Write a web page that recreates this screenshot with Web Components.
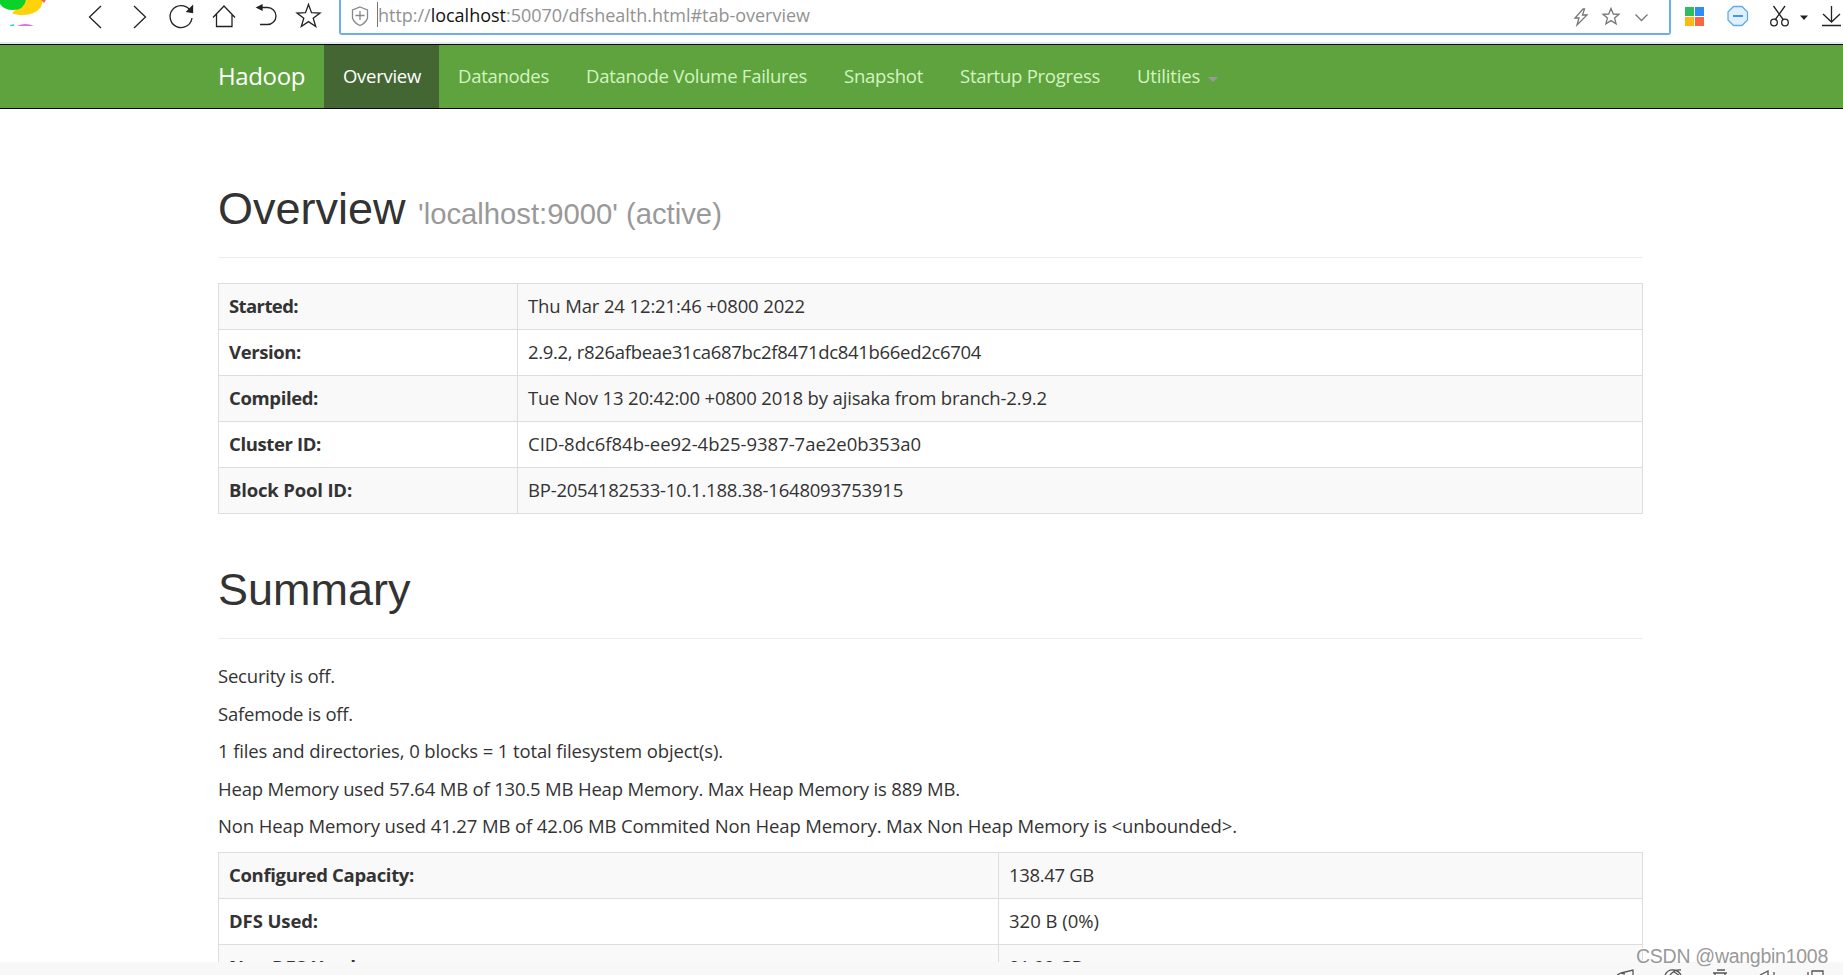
<!DOCTYPE html>
<html lang="en">
<head>
<meta charset="utf-8">
<title>Namenode information</title>
<style>
    body {
        margin: 0;
        height: 975px;
        overflow: hidden;
        background: #fff;
        color: #333;
        font: 18.500px/25px "Open Sans", "Noto Sans", sans-serif;
    }
</style>
</head>
<body>
<dfs-page></dfs-page>

<script>
const define = (name, html, setup) => {
    const template = document.createElement("template")
    template.innerHTML = html
    customElements.define(name, class extends HTMLElement {
        constructor() {
            super()
            this.attachShadow({ mode: "open" })
            this.shadowRoot.appendChild(template.content.cloneNode(true))
        }

        connectedCallback() {
            if (setup) setup(this, this.shadowRoot)
        }
    })
}

// one line of text, spaced out to the width given in "w"
define("fit-text", `
    <style>
        :host { display: inline-block; white-space: nowrap; }
        span { display: inline-block; }
    </style>
    <span><slot></slot></span>
`, (host, root) => {
    const span = root.querySelector("span")
    const width = Number(host.getAttribute("w"))
    if (!width) return
    const spacing = (width - span.getBoundingClientRect().width) / host.textContent.length
    span.style.letterSpacing = spacing.toFixed(3) + "px"
})

define("browser-bar", `
    <style>
        :host { display: flex; height: 42px; border-bottom: 2px solid #e2eaf2; overflow: hidden; background: #fff; }
        svg { display: block; flex: none; fill: none; stroke: #222; stroke-width: 1.3; }
        .address {
            box-sizing: border-box;
            width: 1332px;
            height: 35px;
            border: 2px solid #6aaeee;
            border-top: 0;
            border-radius: 0 0 3px 3px;
            display: flex;
            align-items: flex-start;
        }
        .url {
            flex: 1;
            margin: 2px 0 0 6px;
            border-left: 1px solid #777;
            height: 25px;
            color: #929292;
            font-size: 18px;
            line-height: 27px;
        }
        b { font-weight: 400; color: #111; }
    </style>
    <svg width="339" height="42" viewBox="0 0 339 42">
        <g stroke="none">
            <path fill="#ffd20a" d="M12 13L26 0h16q1 3-1 7-6 8-18 8-8 0-11-2"/>
            <path fill="#ff6347" d="M41 0h5l-2 3z"/>
            <path fill="#0bd22b" d="M0 0h26q-2 10-13 10Q4 10 0 4z"/>
            <path fill="#2ed9df" d="M10 25l4-1v2h-4z"/>
            <path fill="#dc6df0" d="M17 26q8-4 17 0z"/>
        </g>
        <path d="M101 6L89.500 17 101 28M134 6l11.500 11L134 28"/>
        <path d="M189.500 9.500A11 11 0 1 0 192 18"/>
        <path fill="#222" d="M192.500 6v6.500l-5.500-1z"/>
        <path d="M213 17.500L224 6l11 11.500M216.500 14v12.500h15.500V14"/>
        <path d="M259 7.500h8.500a8.500 8.500 0 0 1 0 17H260"/>
        <path fill="#222" d="M257 7.500l5-2.500v5z"/>
        <path d="M308.500 4.500l3 8.200 8.500.3-6.800 5.200 2.500 8.300-7.200-4.900-7.200 4.900 2.500-8.300-6.800-5.200 8.500-.3z"/>
    </svg>
    <div class="address">
        <svg width="30" height="33" viewBox="341 0 30 33" style="stroke:#888">
            <path d="M360 7l7.500 3v8q-1.500 5-7.500 7.500-6-2.500-7.500-7.500v-8zM360 11v9M355.500 15.500h9"/>
        </svg>
        <div class="url"><fit-text w="432">http://<b>localhost</b>:50070/dfshealth.html#tab-overview</fit-text></div>
        <svg width="100" height="33" viewBox="1569 0 100 33" style="stroke:#777">
            <path d="M1583 9l-8 9h4l-2 7 10-10h-4.500l2-6z"/>
            <path d="M1611 8.500l2.300 5.500 5.700.3-4.400 3.800 1.500 5.700-5.100-3.200-5.100 3.200 1.500-5.700-4.400-3.800 5.700-.3z"/>
            <path d="M1635.500 14.500l6 6 6-6"/>
        </svg>
    </div>
    <svg width="172" height="42" viewBox="1671 0 172 42">
        <g stroke="none">
            <path fill="#2dbd60" d="M1685 7h9v9h-9z"/>
            <path fill="#2e8df5" d="M1695 7h9v9h-9z"/>
            <path fill="#fcb813" d="M1685 17h9v9h-9z"/>
            <path fill="#fa6542" d="M1695 17h9v9h-9z"/>
        </g>
        <path stroke="#5fa8ea" fill="#e1f0fc" d="M1733.500 6.500h8.500l5.500 5.500v8l-5.500 5.500h-8.500L1728 20v-8z"/>
        <path stroke="#4398ea" stroke-width="2" d="M1733 16h10"/>
        <path d="M1773.500 6l10 14M1785 6l-10 14"/>
        <circle cx="1774" cy="22.500" r="3.300"/>
        <circle cx="1785" cy="22.500" r="3.300"/>
        <path fill="#222" stroke="none" d="M1800 15.500h8l-4 4.500z"/>
        <path d="M1831.500 6v16M1823 14l8.500 8 8.500-8M1822 25.500h19"/>
    </svg>
`)

define("nav-item", `
    <style>
        :host { display: block; box-sizing: border-box; padding: 18px 18px 0 19px; color: #d2f5c0; }
        :host([active]) { background: #446633; color: #fff; }
        :host([dropdown]) { display: flex; }
        i { display: none; margin: 14px 0 0 8px; height: 0; border: 5px solid transparent; border-top-color: #999; border-bottom: 0; }
        :host([dropdown]) i { display: block; }
    </style>
    <slot></slot><i></i>
`)

define("nav-bar", `
    <style>
        :host { display: flex; height: 63px; padding-left: 218px; background: #5fa33e; border: solid #080808; border-width: 1px 0; }
        .brand { width: 106px; color: #fff; font-size: 24px; font-weight: 500; line-height: 62px; }
    </style>
    <div class="brand"><fit-text w="87">Hadoop</fit-text></div>
    <slot></slot>
`)

define("page-header", `
    <style>
        :host { display: block; border-bottom: 1px solid #eee; }
        h1 { margin: 0; font: 45px/52px "Liberation Sans", Arial, sans-serif; }
        ::slotted(small) { font-size: 29.250px; color: #999; }
    </style>
    <h1><slot></slot></h1>
`)

define("info-row", `
    <style>
        :host { display: flex; height: 45px; border-bottom: 1px solid #ddd; line-height: 44px; }
        :host(:nth-child(odd)) { background: #f9f9f9; }
        b { flex: none; box-sizing: border-box; width: var(--head); padding-left: 10px; border-right: 1px solid #ddd; font-weight: 700; }
        div { padding-left: 10px; }
    </style>
    <b><slot name="head"></slot></b>
    <div><slot></slot></div>
`)

define("info-table", `
    <style>
        :host { display: block; border: 1px solid #ddd; border-bottom: 0; }
    </style>
    <slot></slot>
`)

define("status-bar", `
    <style>
        :host { display: flex; justify-content: flex-end; height: 13px; background: #f8f8f8; overflow: hidden; }
        svg { display: block; fill: none; stroke: #555; stroke-width: 1.3; }
    </style>
    <svg width="243" height="13" viewBox="1600 962 243 13">
        <path d="M1617 975l4-2 4 1M1621 973l12-3v5"/>
        <path d="M1665 975q3-6 9-5 5 1 7 5M1670 975q5-6 11-5M1674 972l5 3"/>
        <path d="M1717 970h8M1713 973h14M1715 973v2M1725 973v2"/>
        <path d="M1760 975l8-4v4M1774 972v3"/>
        <path d="M1808 972v3M1812 975v-4h11v4"/>
    </svg>
`)

define("dfs-page", `
    <style>
        :host { display: flex; flex-direction: column; height: 975px; position: relative; }
        main { flex: 1; min-height: 0; overflow: hidden; width: 1425px; margin-left: 218px; }
        .overview { padding-top: 74px; height: 74px; }
        .overview + info-table { margin-top: 25px; --head: 299px; }
        .summary { padding-top: 50px; height: 74px; }
        p { margin: 0 0 12.500px; }
        .text { padding-top: 24px; height: 188.500px; }
        .text + info-table { --head: 780px; }
        .mark {
            position: absolute;
            left: 1636px;
            top: 943px;
            color: #999;
            font: 19.500px/26px "Liberation Sans", Arial, sans-serif;
            text-shadow: -1px -1px 0 #fff;
        }
    </style>
    <browser-bar></browser-bar>
    <nav-bar>
        <nav-item active><fit-text w="78">Overview</fit-text></nav-item>
        <nav-item><fit-text w="91">Datanodes</fit-text></nav-item>
        <nav-item><fit-text w="221">Datanode Volume Failures</fit-text></nav-item>
        <nav-item><fit-text w="79">Snapshot</fit-text></nav-item>
        <nav-item><fit-text w="140">Startup Progress</fit-text></nav-item>
        <nav-item dropdown><fit-text w="63">Utilities</fit-text></nav-item>
    </nav-bar>
    <main>
        <page-header class="overview">Overview <small>'localhost:9000' (active)</small></page-header>
        <info-table>
            <info-row><fit-text slot="head" w="69">Started:</fit-text><fit-text w="277">Thu Mar 24 12:21:46 +0800 2022</fit-text></info-row>
            <info-row><fit-text slot="head" w="72">Version:</fit-text><fit-text w="453">2.9.2, r826afbeae31ca687bc2f8471dc841b66ed2c6704</fit-text></info-row>
            <info-row><fit-text slot="head" w="89">Compiled:</fit-text><fit-text w="519">Tue Nov 13 20:42:00 +0800 2018 by ajisaka from branch-2.9.2</fit-text></info-row>
            <info-row><fit-text slot="head" w="92">Cluster ID:</fit-text><fit-text w="393">CID-8dc6f84b-ee92-4b25-9387-7ae2e0b353a0</fit-text></info-row>
            <info-row><fit-text slot="head" w="123">Block Pool ID:</fit-text><fit-text w="375">BP-2054182533-10.1.188.38-1648093753915</fit-text></info-row>
        </info-table>
        <page-header class="summary">Summary</page-header>
        <div class="text">
            <p><fit-text w="117">Security is off.</fit-text></p>
            <p><fit-text w="135">Safemode is off.</fit-text></p>
            <p><fit-text w="505">1 files and directories, 0 blocks = 1 total filesystem object(s).</fit-text></p>
            <p><fit-text w="742">Heap Memory used 57.64 MB of 130.5 MB Heap Memory. Max Heap Memory is 889 MB.</fit-text></p>
            <p><fit-text w="1019">Non Heap Memory used 41.27 MB of 42.06 MB Commited Non Heap Memory. Max Non Heap Memory is &lt;unbounded&gt;.</fit-text></p>
        </div>
        <info-table>
            <info-row><fit-text slot="head" w="185">Configured Capacity:</fit-text><fit-text w="85">138.47 GB</fit-text></info-row>
            <info-row><fit-text slot="head" w="89">DFS Used:</fit-text><fit-text w="90">320 B (0%)</fit-text></info-row>
            <info-row><fit-text slot="head" w="132">Non DFS Used:</fit-text><fit-text w="74">91.99 GB</fit-text></info-row>
        </info-table>
    </main>
    <status-bar></status-bar>
    <div class="mark"><fit-text w="192">CSDN @wangbin1008</fit-text></div>
`)
</script>
</body>
</html>
